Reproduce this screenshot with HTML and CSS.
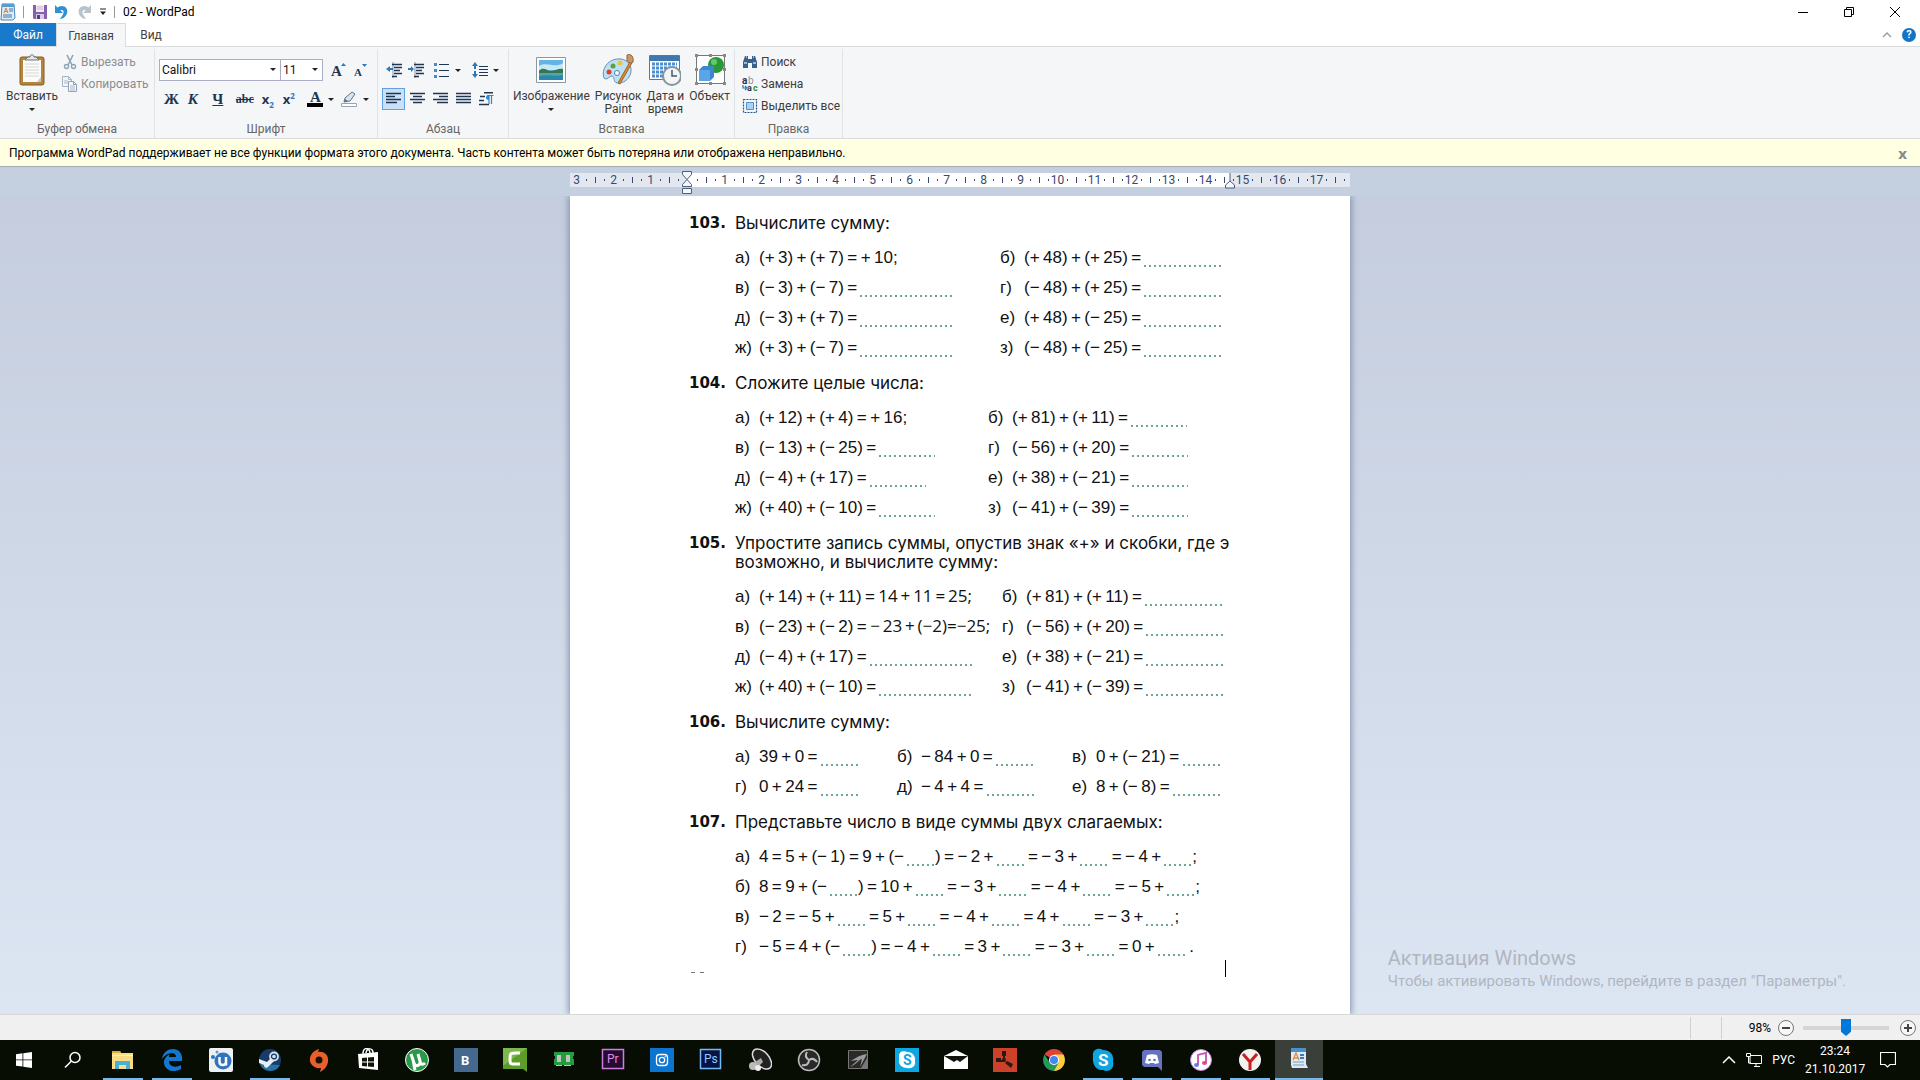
FILE: index.html
```html
<!DOCTYPE html>
<html lang="ru">
	<head>
		<meta charset="utf-8">
		<title>02 - WordPad</title>
		<link rel="stylesheet" href="styles.css">
	</head>

	<body>
		<header class="titleBar">
			<svg class="appIcon" width="16" height="18" viewBox="0 0 16 18"><path d="M2 1h12l1 14-2 2H1z" fill="#dcecf8" stroke="#4a83b5"/><path d="M2 1h12v3H2z" fill="#5a9bd0"/><path d="M4 10l2-5 2 5M5 8.500h2" fill="none" stroke="#e07a2c"/><path d="M9 6h4M9 8h4M3 12h9M3 14h9" stroke="#3d76ab"/></svg>
			<span class="divider"></span>
			<button aria-label="Сохранить"><svg width="16" height="16" viewBox="0 0 16 16"><path d="M1 1h14v14H2l-1-1z" fill="#8560ac"/><path d="M4 1h8v7H4z" fill="#f1e9f6"/><path d="M5 3h6M5 5h6" stroke="#c7b5d6"/><path d="M4 10h8v5H4z" fill="#d9cde5"/><path d="M5 11h3v4H5z" fill="#5d3d85"/></svg></button>
			<button aria-label="Отменить"><svg width="16" height="16" viewBox="0 0 16 16"><path d="M1 1v8h8L6.300 6.300C9 5 10.500 7 9 10.500L6 15c9-1 10-13 1.500-13-2 0-3 .8-4 1.600z" fill="#2d91d2"/></svg></button>
			<button aria-label="Повторить"><svg width="16" height="16" viewBox="0 0 16 16"><path d="M15 1v8H7l2.700-2.700C7 5 5.500 7 7 10.500L10 15C1 14 0 2 8.500 2c2 0 3 .8 4 1.600z" fill="#b9c3cd"/></svg></button>
			<button class="customize" aria-label="Настройка панели"><svg width="8" height="8" viewBox="0 0 8 8"><path d="M1 1h6" stroke="#222"/><path d="M1 3.500h6L4 7z" fill="#222"/></svg></button>
			<span class="divider"></span>
			<h1>02 - WordPad</h1>
			<div class="windowButtons">
				<button aria-label="Свернуть"><svg width="12" height="12" viewBox="0 0 12 12"><path d="M1 6.500h10" stroke="#000"/></svg></button>
				<button aria-label="Восстановить"><svg width="12" height="12" viewBox="0 0 12 12"><path d="M1.500 3.500h7v7h-7zM3.500 3.500v-2h7v7h-2" fill="none" stroke="#000"/></svg></button>
				<button aria-label="Закрыть"><svg width="12" height="12" viewBox="0 0 12 12"><path d="M1 1l10 10M11 1L1 11" stroke="#000"/></svg></button>
			</div>
		</header>

		<nav class="tabs">
			<button class="tab file">Файл</button>
			<button class="tab active">Главная</button>
			<button class="tab">Вид</button>
			<div class="tabTools">
				<button aria-label="Свернуть ленту"><svg width="10" height="6" viewBox="0 0 10 6"><path d="M1 5l4-4 4 4" fill="none" stroke="#9a9a9a" stroke-width="1.300"/></svg></button>
				<button class="help" aria-label="Справка">?</button>
			</div>
		</nav>

		<section class="ribbon">
			<div class="group clipboard">
				<div class="groupBody">
					<button class="big">
						<svg width="26" height="32" viewBox="0 0 26 32"><rect x="1" y="3" width="24" height="28" rx="2" fill="#b5843f" stroke="#875b20"/><path d="M4 6h18v22H4z" fill="#fbfbf7"/><path d="M6 10h14M6 13h14M6 16h14M6 19h14M6 22h14" stroke="#d5d8d8"/><path d="M18 28l4-5v5z" fill="#c9c9c4"/><path d="M6 6l3-3h2c0-3 4-3 4 0h2l3 3z" fill="#e3e8ec" stroke="#68747e"/></svg>
						<span>Вставить</span>
						<i class="arrow"></i>
					</button>
					<div class="stack">
						<button class="row disabled"><svg width="16" height="16" viewBox="0 0 16 16"><path d="M5 1l5 10M11 1L6 11" stroke="#8fa3b8" stroke-width="1.600"/><circle cx="4.500" cy="12.500" r="2" fill="none" stroke="#8fa3b8" stroke-width="1.400"/><circle cx="11.500" cy="12.500" r="2" fill="none" stroke="#8fa3b8" stroke-width="1.400"/></svg>Вырезать</button>
						<button class="row disabled"><svg width="16" height="16" viewBox="0 0 16 16"><path d="M.500.500h6l3 3v7h-9zM6.500.500v3h3" fill="#f4f7fa" stroke="#a3b4c6"/><path d="M6.500 5.500h5l3 3v7h-8zM11.500 5.500v3h3" fill="#f4f7fa" stroke="#8fa3b8"/><path d="M8 10h5M8 12h5M8 14h5M2 5h4M2 7h4" stroke="#a9bacb"/></svg>Копировать</button>
					</div>
				</div>
				<h2>Буфер обмена</h2>
			</div>

			<div class="group font">
				<div class="lines">
					<div class="line">
						<label class="combo family"><select aria-label="Шрифт"><option>Calibri</option></select></label>
						<label class="combo size"><select aria-label="Размер"><option>11</option></select></label>
						<button class="tool grow" aria-label="Увеличить размер"><svg width="16" height="16" viewBox="0 0 16 16"><text x="0" y="14" class="serif" font-size="15">A</text><path d="M10 4l2.500-3L15 4z" fill="#2a78bd"/></svg></button>
						<button class="tool" aria-label="Уменьшить размер"><svg width="14" height="16" viewBox="0 0 14 16"><text x="0" y="14" class="serif" font-size="11">A</text><path d="M8 2l2.500 3L13 2z" fill="#2a78bd"/></svg></button>
					</div>
					<div class="line second">
						<button class="tool letter">Ж</button>
						<button class="tool letter italic">К</button>
						<button class="tool letter underline">Ч</button>
						<button class="tool letter strike">abc</button>
						<button class="tool letter index">x<sub>2</sub></button>
						<button class="tool letter index">x<sup>2</sup></button>
						<button class="tool color" aria-label="Цвет текста"><svg width="16" height="16" viewBox="0 0 16 16"><text x="3" y="11" class="serif" font-size="15">A</text><path d="M0 12h16v4H0z" fill="#000"/></svg><i class="arrow"></i></button>
						<button class="tool" aria-label="Цвет выделения"><svg width="17" height="16" viewBox="0 0 17 16"><path d="M3 11l1-4 7-6 3 2-5 7z" fill="#dbe4ee" stroke="#5b7390"/><path d="M3 11l1-3 3 2z" fill="#5b7390"/><path d="M.500 12.500h15v3H.500z" fill="#fff" stroke="#98a5b3"/></svg><i class="arrow"></i></button>
					</div>
				</div>
				<h2>Шрифт</h2>
			</div>

			<div class="group paragraph">
				<div class="lines">
					<div class="line">
						<button class="tool" aria-label="Уменьшить отступ"><svg width="16" height="16" viewBox="0 0 16 16"><path d="M6 2.500h10M8 5.500h8M8 8.500h6M8 11.500h8M6 14.500h5" stroke="#1f3653" stroke-width="1.400"/><path d="M7 .500v15" stroke="#1f3653" stroke-dasharray="1 1"/><path d="M0 7l4-3v2h3v2H4v2z" fill="#2a78bd"/></svg></button>
						<button class="tool" aria-label="Увеличить отступ"><svg width="16" height="16" viewBox="0 0 16 16"><path d="M6 2.500h10M8 5.500h8M8 8.500h6M8 11.500h8M6 14.500h5" stroke="#1f3653" stroke-width="1.400"/><path d="M7 .500v15" stroke="#1f3653" stroke-dasharray="1 1"/><path d="M6 7L3 4v2H0v2h3v2z" fill="#2a78bd"/></svg></button>
						<button class="tool list" aria-label="Список"><svg width="16" height="16" viewBox="0 0 16 16"><path d="M5 2.500h10M5 8.500h10M5 14.500h10" stroke="#1f3653"/><path d="M0 1h3v3H0zM0 7h3v3H0zM0 13h3v3H0z" fill="#4b8ac2"/></svg><i class="arrow"></i></button>
						<button class="tool" aria-label="Интервал"><svg width="16" height="16" viewBox="0 0 16 16"><path d="M7 4.500h9M7 7.500h9M7 10.500h9M7 13.500h9" stroke="#1f3653" stroke-width="1.200"/><path d="M3 0l3 4H4v3H2V4H0zM3 16l3-4H4V9H2v3H0z" fill="#2a78bd"/></svg><i class="arrow"></i></button>
					</div>
					<div class="line second align">
						<button class="tool selected" aria-label="По левому краю"><svg width="15" height="14" viewBox="0 0 15 14"><path d="M0 1.500h15M0 4.500h9M0 7.500h15M0 10.500h11" stroke="#1f3653" stroke-width="1.400"/></svg></button>
						<button class="tool" aria-label="По центру"><svg width="15" height="14" viewBox="0 0 15 14"><path d="M0 1.500h15M3 4.500h9M0 7.500h15M3 10.500h9" stroke="#1f3653" stroke-width="1.400"/></svg></button>
						<button class="tool" aria-label="По правому краю"><svg width="15" height="14" viewBox="0 0 15 14"><path d="M0 1.500h15M6 4.500h9M0 7.500h15M4 10.500h11" stroke="#1f3653" stroke-width="1.400"/></svg></button>
						<button class="tool" aria-label="По ширине"><svg width="15" height="14" viewBox="0 0 15 14"><path d="M0 1.500h15M0 4.500h15M0 7.500h15M0 10.500h15" stroke="#1f3653" stroke-width="1.400"/></svg></button>
						<button class="tool" aria-label="Абзац"><svg width="15" height="14" viewBox="0 0 15 14"><path d="M5 .700h9M1 4.500h5M0 8.500h5M0 12.500h10" stroke="#1f3653" stroke-width="1.400"/><path d="M8 3.500h6.500M10 4v8M12.500 4v8" fill="none" stroke="#2a88d8" stroke-width="1.200"/><path d="M10 3c-4 0-4 5 0 5z" fill="#2a88d8"/></svg></button>
					</div>
				</div>
				<h2>Абзац</h2>
			</div>

			<div class="group insert">
				<div class="groupBody">
					<button class="big">
						<svg width="32" height="32" viewBox="0 0 32 32"><path d="M1.500 3.500h29v25h-29z" fill="#fff" stroke="#8b98a4"/><path d="M4 6h24v20H4z" fill="#63b4e4"/><path d="M4 12c8-5 16 3 24-3v7H4z" fill="#c9e8f6"/><path d="M4 17c4-5 8 0 12 0s8-3 12-2v5H4z" fill="#36764f"/><path d="M4 19h24v7H4z" fill="#4fa5b8"/><path d="M4 22c9-2 15 1 24-1v5H4z" fill="#2b86a8"/></svg>
						<span>Изображение</span>
						<i class="arrow"></i>
					</button>
					<button class="big">
						<svg width="32" height="32" viewBox="0 0 32 32"><path d="M2 24C-1 16 5 6 15 5c8-1 15 4 14 13-1 7-8 12-14 11-4-1-2-6-5-7-3 0-5 5-8 2z" fill="#bfdff3" stroke="#6394b8"/><circle cx="7" cy="18" r="2.500" fill="#d8412f"/><circle cx="11" cy="12" r="2.500" fill="#55a447"/><circle cx="18" cy="9" r="2.500" fill="#efc43d"/><circle cx="15" cy="19" r="2.500" fill="#fff" stroke="#4b83b6"/><path d="M29 6l2 1-13 23-2-1z" fill="#d88b39" stroke="#a5611f"/><path d="M25 1c4-2 7 2 6 7-2 2-5 0-6-1z" fill="#c9986a" stroke="#8e643b"/></svg>
						<span>Рисунок<br>Paint</span>
					</button>
					<button class="big">
						<svg width="32" height="32" viewBox="0 0 32 32"><path d="M.500 1.500h30v24h-30z" fill="#fff" stroke="#55789c"/><path d="M1 2h29v5H1z" fill="#3f78ad"/><path d="M3 10h25M3 14h25M3 18h25M3 22h25" stroke="#4b8fd0" stroke-width="3" stroke-dasharray="3 1"/><circle cx="23" cy="22" r="9" fill="#f2f4f5" stroke="#87939d" stroke-width="2"/><path d="M23 16v6h5" fill="none" stroke="#4a5966" stroke-width="1.500"/></svg>
						<span>Дата и<br>время</span>
					</button>
					<button class="big">
						<svg width="32" height="32" viewBox="0 0 32 32"><path d="M2.500 1.500h28v28h-28z" fill="#fff" stroke="#777"/><path d="M1 0h3v3H1zM15 0h3v3h-3zM29 0h3v3h-3zM1 14h3v3H1zM29 14h3v3h-3zM1 28h3v3H1zM15 28h3v3h-3zM29 28h3v3h-3z" fill="#888"/><circle cx="22" cy="11" r="8" fill="#289a35"/><circle cx="20" cy="8" r="3" fill="#68c66f"/><path d="M5 16l4-4h11v11l-4 4H5z" fill="#3b88d0"/><path d="M5 16h11v11H5z" fill="#5aa5e8"/></svg>
						<span>Объект</span>
					</button>
				</div>
				<h2>Вставка</h2>
			</div>

			<div class="group edit">
				<div class="stack">
					<button class="row"><svg width="16" height="16" viewBox="0 0 16 16"><path d="M3 2h3v3h4V2h3l2 6v6h-5V9H6v5H1V8z" fill="#3a5f8c"/><path d="M2 9h3M11 9h3M4 3h1M11 3h1" stroke="#c4d7ec" stroke-width="1.500"/></svg>Поиск</button>
					<button class="row"><svg width="16" height="16" viewBox="0 0 16 16"><text x="0" y="8" font-size="10" font-weight="bold" fill="#1f3653">a</text><text x="6" y="8" font-size="10" fill="#8b949e">b</text><text x="5" y="15" font-size="9" font-weight="bold" fill="#1f3653">a</text><text x="11" y="15" font-size="9" font-weight="bold" fill="#2b8b33">c</text><path d="M1 9v3h3M3 10l2 2-2 2" fill="none" stroke="#2a78bd" stroke-width="1.200"/></svg>Замена</button>
					<button class="row"><svg width="16" height="16" viewBox="0 0 16 16"><path d="M1.500 1.500h13v13h-13z" fill="none" stroke="#23598e" stroke-width="1.200" stroke-dasharray="2 1"/><path d="M4.500 4.500h7v7h-7z" fill="#a9d2f5" stroke="#4b93d2"/></svg>Выделить все</button>
				</div>
				<h2>Правка</h2>
			</div>
		</section>

		<aside class="notice">
			<p>Программа WordPad поддерживает не все функции формата этого документа. Часть контента может быть потеряна или отображена неправильно.</p>
			<button aria-label="Закрыть сообщение">x</button>
		</aside>

		<main class="workspace">
			<div class="rulerBand">
				<div class="ruler">
					<div class="scale">
						<span class="first">3</span><span>2</span><span>1</span><span></span><span>1</span><span>2</span><span>3</span><span>4</span><span>5</span><span>6</span><span>7</span><span>8</span><span>9</span><span>10</span><span>11</span><span>12</span><span>13</span><span>14</span><span>15</span><span>16</span><span>17</span><span></span>
					</div>
					<svg class="marker left" width="10" height="24" viewBox="0 0 10 24"><path d="M.500.500h9v3L5 8.500.500 3.500zM5 8.500l4.500 5v2h-9v-2zM.500 17.500h9v5h-9z" fill="#f3f6fa" stroke="#4c5f7c"/></svg>
					<svg class="marker right" width="10" height="16" viewBox="0 0 10 16"><path d="M5 0v8l4.500 4v3h-9v-3L5 8" fill="#f3f6fa" stroke="#4c5f7c"/></svg>
				</div>
			</div>

			<article class="page">
				<section class="task">
					<h3><b>103.</b><span>Вычислите сумму:</span></h3>
					<ol class="two t103">
						<li><i>а)</i>(+&thinsp;3)&thinsp;+&thinsp;(+&thinsp;7)&thinsp;=&thinsp;+&thinsp;10;</li>
						<li><i>б)</i>(+&thinsp;48)&thinsp;+&thinsp;(+&thinsp;25)&thinsp;=<u class="w80"></u></li>
						<li><i>в)</i>(−&thinsp;3)&thinsp;+&thinsp;(−&thinsp;7)&thinsp;=<u class="w95"></u></li>
						<li><i>г)</i>(−&thinsp;48)&thinsp;+&thinsp;(+&thinsp;25)&thinsp;=<u class="w80"></u></li>
						<li><i>д)</i>(−&thinsp;3)&thinsp;+&thinsp;(+&thinsp;7)&thinsp;=<u class="w95"></u></li>
						<li><i>е)</i>(+&thinsp;48)&thinsp;+&thinsp;(−&thinsp;25)&thinsp;=<u class="w80"></u></li>
						<li><i>ж)</i>(+&thinsp;3)&thinsp;+&thinsp;(−&thinsp;7)&thinsp;=<u class="w95"></u></li>
						<li><i>з)</i>(−&thinsp;48)&thinsp;+&thinsp;(−&thinsp;25)&thinsp;=<u class="w80"></u></li>
					</ol>
				</section>

				<section class="task">
					<h3><b>104.</b><span>Сложите целые числа:</span></h3>
					<ol class="two t104">
						<li><i>а)</i>(+&thinsp;12)&thinsp;+&thinsp;(+&thinsp;4)&thinsp;=&thinsp;+&thinsp;16;</li>
						<li><i>б)</i>(+&thinsp;81)&thinsp;+&thinsp;(+&thinsp;11)&thinsp;=<u class="w55"></u></li>
						<li><i>в)</i>(−&thinsp;13)&thinsp;+&thinsp;(−&thinsp;25)&thinsp;=<u class="w55"></u></li>
						<li><i>г)</i>(−&thinsp;56)&thinsp;+&thinsp;(+&thinsp;20)&thinsp;=<u class="w55"></u></li>
						<li><i>д)</i>(−&thinsp;4)&thinsp;+&thinsp;(+&thinsp;17)&thinsp;=<u class="w55"></u></li>
						<li><i>е)</i>(+&thinsp;38)&thinsp;+&thinsp;(−&thinsp;21)&thinsp;=<u class="w55"></u></li>
						<li><i>ж)</i>(+&thinsp;40)&thinsp;+&thinsp;(−&thinsp;10)&thinsp;=<u class="w55"></u></li>
						<li><i>з)</i>(−&thinsp;41)&thinsp;+&thinsp;(−&thinsp;39)&thinsp;=<u class="w55"></u></li>
					</ol>
				</section>

				<section class="task">
					<h3><b>105.</b><span>Упростите запись суммы, опустив знак «+» и скобки, где э<br>возможно, и вычислите сумму:</span></h3>
					<ol class="two t105">
						<li><i>а)</i>(+&thinsp;14)&thinsp;+&thinsp;(+&thinsp;11)&thinsp;=&thinsp;<em>14&thinsp;+&thinsp;11&thinsp;=&thinsp;25;</em></li>
						<li><i>б)</i>(+&thinsp;81)&thinsp;+&thinsp;(+&thinsp;11)&thinsp;=<u class="w80"></u></li>
						<li><i>в)</i>(−&thinsp;23)&thinsp;+&thinsp;(−&thinsp;2)&thinsp;=&thinsp;<em>−&thinsp;23&thinsp;+&thinsp;(−2)=−25;</em></li>
						<li><i>г)</i>(−&thinsp;56)&thinsp;+&thinsp;(+&thinsp;20)&thinsp;=<u class="w80"></u></li>
						<li><i>д)</i>(−&thinsp;4)&thinsp;+&thinsp;(+&thinsp;17)&thinsp;=<u class="w105"></u></li>
						<li><i>е)</i>(+&thinsp;38)&thinsp;+&thinsp;(−&thinsp;21)&thinsp;=<u class="w80"></u></li>
						<li><i>ж)</i>(+&thinsp;40)&thinsp;+&thinsp;(−&thinsp;10)&thinsp;=<u class="w95"></u></li>
						<li><i>з)</i>(−&thinsp;41)&thinsp;+&thinsp;(−&thinsp;39)&thinsp;=<u class="w80"></u></li>
					</ol>
				</section>

				<section class="task">
					<h3><b>106.</b><span>Вычислите сумму:</span></h3>
					<ol class="three">
						<li><i>а)</i>39&thinsp;+&thinsp;0&thinsp;=&thinsp;<u class="w40"></u></li>
						<li><i>б)</i>−&thinsp;84&thinsp;+&thinsp;0&thinsp;=&thinsp;<u class="w40"></u></li>
						<li><i>в)</i>0&thinsp;+&thinsp;(−&thinsp;21)&thinsp;=&thinsp;<u class="w40"></u></li>
						<li><i>г)</i>0&thinsp;+&thinsp;24&thinsp;=&thinsp;<u class="w40"></u></li>
						<li><i>д)</i>−&thinsp;4&thinsp;+&thinsp;4&thinsp;=&thinsp;<u class="w50"></u></li>
						<li><i>е)</i>8&thinsp;+&thinsp;(−&thinsp;8)&thinsp;=&thinsp;<u class="w50"></u></li>
					</ol>
				</section>

				<section class="task">
					<h3><b>107.</b><span>Представьте число в виде суммы двух слагаемых:</span></h3>
					<ol class="chain">
						<li><i>а)</i>4&thinsp;=&thinsp;5&thinsp;+&thinsp;(−&thinsp;1)&thinsp;=&thinsp;9&thinsp;+&thinsp;(−<u></u>)&thinsp;=&thinsp;−&thinsp;2&thinsp;+<u></u>&thinsp;=&thinsp;−&thinsp;3&thinsp;+<u></u>&thinsp;=&thinsp;−&thinsp;4&thinsp;+<u></u>;</li>
						<li><i>б)</i>8&thinsp;=&thinsp;9&thinsp;+&thinsp;(−<u></u>)&thinsp;=&thinsp;10&thinsp;+<u></u>&thinsp;=&thinsp;−&thinsp;3&thinsp;+<u></u>&thinsp;=&thinsp;−&thinsp;4&thinsp;+<u></u>&thinsp;=&thinsp;−&thinsp;5&thinsp;+<u></u>;</li>
						<li><i>в)</i>−&thinsp;2&thinsp;=&thinsp;−&thinsp;5&thinsp;+<u></u>&thinsp;=&thinsp;5&thinsp;+<u></u>&thinsp;=&thinsp;−&thinsp;4&thinsp;+<u></u>&thinsp;=&thinsp;4&thinsp;+<u></u>&thinsp;=&thinsp;−&thinsp;3&thinsp;+<u></u>;</li>
						<li><i>г)</i>−&thinsp;5&thinsp;=&thinsp;4&thinsp;+&thinsp;(−<u></u>)&thinsp;=&thinsp;−&thinsp;4&thinsp;+<u></u>&thinsp;=&thinsp;3&thinsp;+<u></u>&thinsp;=&thinsp;−&thinsp;3&thinsp;+<u></u>&thinsp;=&thinsp;0&thinsp;+<u></u>&thinsp;.</li>
					</ol>
				</section>
				<div class="tail"><span class="dashes"></span><span class="caret"></span></div>
			</article>

			<div class="watermark">
				<strong>Активация Windows</strong>
				<p>Чтобы активировать Windows, перейдите в раздел "Параметры".</p>
			</div>
		</main>

		<footer class="statusBar">
			<span class="cell"></span>
			<label for="zoom">98%</label>
			<button aria-label="Уменьшить"><svg width="16" height="16" viewBox="0 0 16 16"><circle cx="8" cy="8" r="7.500" fill="#f7f7f7" stroke="#777"/><path d="M4 8h8" stroke="#444" stroke-width="2"/></svg></button>
			<input id="zoom" type="range" min="0" max="200" value="100">
			<button aria-label="Увеличить"><svg width="16" height="16" viewBox="0 0 16 16"><circle cx="8" cy="8" r="7.500" fill="#f7f7f7" stroke="#777"/><path d="M4 8h8M8 4v8" stroke="#444" stroke-width="2"/></svg></button>
		</footer>

		<nav class="taskbar">
			<button class="sys" aria-label="Пуск"><svg width="16" height="16" viewBox="0 0 16 16"><path d="M0 2.200l6.500-.900v6.200H0zM7.300 1.200L16 0v7.500H7.300zM0 8.300h6.500v6.300L0 13.700zM7.300 8.300H16V16l-8.700-1.300z" fill="#fff"/></svg></button>
			<button class="sys search" aria-label="Поиск"><svg width="18" height="18" viewBox="0 0 18 18"><circle cx="11" cy="6.500" r="5" fill="none" stroke="#fff" stroke-width="1.500"/><path d="M7.300 10.200L1 16.500" stroke="#fff" stroke-width="1.500"/></svg></button>
			<button class="running" aria-label="Проводник"><svg viewBox="0 0 24 24"><path d="M1 3h8l1 2h12v16H1z" fill="#f9dc86"/><path d="M1 3h8l1 2H1z" fill="#e0aa3c"/><path d="M1 7h21v1H1z" fill="#fff0bd"/><path d="M4 13h15v8h-4v-4H8v4H4z" fill="#47b0d3"/></svg></button>
			<button class="running" aria-label="Edge"><svg viewBox="0 0 24 24"><path d="M2 11C3 4 8 1 13 1c6 0 10 5 9 12H9c0 6 7 7 12 4v4C12 26 3 21 4 13c1-4 4-6 6-7-1 1-1 2-1 3h7c0-6-9-5-14 2z" fill="#1277d1"/></svg></button>
			<button aria-label="uCoz"><svg viewBox="0 0 24 24"><rect width="24" height="24" rx="2" fill="#eef1f4"/><circle cx="14" cy="13" r="8.500" fill="#3174bc"/><circle cx="4" cy="9" r="2" fill="#3174bc"/><circle cx="8" cy="4" r="1.500" fill="#5d9bd6"/><path d="M10.500 9v5c0 4 6.500 4 6.500 0V9v8.500" fill="none" stroke="#fff" stroke-width="2.500"/></svg></button>
			<button class="running split" aria-label="Steam"><svg viewBox="0 0 24 24"><circle cx="12" cy="12" r="11" fill="#173b6b"/><path d="M2 16a11 11 0 0 0 20 1z" fill="#2673a5"/><circle cx="16" cy="8.500" r="4" fill="none" stroke="#d9e2ea" stroke-width="1.800"/><circle cx="16" cy="8.500" r="1.800" fill="#d9e2ea"/><path d="M1 11l8 3 4-4 3 3-5 5c-2 3-5 2-5-1l-5-2z" fill="#e9eff3"/></svg></button>
			<button aria-label="Origin"><svg viewBox="0 0 24 24"><path d="M12 1l-1 3c7-1 11 4 10 10-1 5-4 8-8 10l1-4C7 21 2 16 3 10c1-5 5-8 9-9z" fill="#e85f2b"/><circle cx="12" cy="12" r="3.500" fill="#151107"/></svg></button>
			<button aria-label="Store"><svg viewBox="0 0 24 24"><path d="M2 6l20-2v18L3 20z" fill="#fff"/><path d="M7 6c0-7 6-7 7-1M10 5c1-6 7-5 7 0" fill="none" stroke="#fff" stroke-width="1.500"/><path d="M6 10l5-.500v4H6zM12 9.400l6-.500v4.600h-6zM6 14.500h5v4l-5-.500zM12 14.500h6v4.500l-6-.500z" fill="#10150a"/></svg></button>
			<button aria-label="uTorrent"><svg viewBox="0 0 24 24"><circle cx="12" cy="12" r="11.500" fill="#2a994a" stroke="#fff"/><path d="M6 6l3 9c2 5 7 2 6-2l-2-7m2 7c1 4 3 4 5 2M8 12l2 10" fill="none" stroke="#fff" stroke-width="3"/></svg></button>
			<button aria-label="VK"><svg viewBox="0 0 24 24"><path d="M0 0h24v24H0z" fill="#45688e"/><text x="7" y="17" font-size="13" font-weight="bold" fill="#fff">B</text></svg></button>
			<button aria-label="Camtasia"><svg viewBox="0 0 24 24"><path d="M0 0h24v24l-4-3H0z" fill="#5d9c28"/><path d="M0 0h24L0 18z" fill="#7db84b"/><path d="M17 5h-5c-5 0-5 1-5 6s0 5 5 5h5" fill="none" stroke="#fff" stroke-width="3"/></svg></button>
			<button aria-label="Память"><svg viewBox="0 0 24 24"><path d="M2 4h20v4h-1v3h1v6H2v-6h1V8H2z" fill="#249b41"/><path d="M4 17h6v1H4zM12 17h7v1h-7z" fill="#c7dd39"/><path d="M5 7h4v7H5zM14 7h4v7h-4z" fill="#bec5bb"/></svg></button>
			<button aria-label="Premiere"><svg viewBox="0 0 24 24"><path d="M1.500 1.500h21v19h-21z" fill="#250b31" stroke="#cb7ede" stroke-width="1.500"/><text x="6" y="15" font-size="12" fill="#dc8cf0">Pr</text></svg></button>
			<button aria-label="Instagram"><svg viewBox="0 0 24 24"><path d="M0 0h24v24H0z" fill="#0b74d0"/><rect x="6.500" y="6.500" width="11" height="11" rx="3" fill="none" stroke="#fff" stroke-width="1.300"/><circle cx="12" cy="12" r="2.700" fill="none" stroke="#fff" stroke-width="1.300"/><circle cx="15.200" cy="8.800" r=".700" fill="#fff"/></svg></button>
			<button aria-label="Photoshop"><svg viewBox="0 0 24 24"><path d="M1.500 1.500h20v19h-20z" fill="#061445" stroke="#76baf5" stroke-width="1.500"/><text x="5" y="15" font-size="12" fill="#8ccbfa">Ps</text></svg></button>
			<button aria-label="Звук"><svg viewBox="0 0 24 24"><ellipse cx="14" cy="11" rx="7" ry="12" transform="rotate(-42 14 11)" fill="#222" stroke="#ddd" stroke-width="1.500"/><path d="M7 14l6-4 2 4-5 5z" fill="#aaa"/><circle cx="5" cy="18" r="4" fill="#bbb"/><circle cx="10" cy="20" r="3" fill="#eee"/></svg></button>
			<button aria-label="OBS"><svg viewBox="0 0 24 24"><circle cx="12" cy="12" r="10.500" fill="#292929" stroke="#bbb" stroke-width="1.500"/><path d="M10 4c-2 3-1 6 2 8 3-2 6-1 8 2M12 12c0 4-3 6-7 5" fill="none" stroke="#bbb" stroke-width="2"/></svg></button>
			<button aria-label="NVIDIA"><svg viewBox="0 0 24 24"><path d="M2.500 2.500h19v18h-19z" fill="#2a2a2a" stroke="#777"/><path d="M4 13c4-1 6-5 17-7l-7 13 2-8c-4 1-6 6-12 8l8-7z" fill="#999"/><path d="M15 20l6-10v10z" fill="#777"/></svg></button>
			<button aria-label="Skype"><svg viewBox="0 0 24 24"><path d="M0 0h24v24H0z" fill="#0ba7e2"/><path d="M4 7c1-5 6-4 8-3 6 0 9 5 8 9 1 5-3 8-8 7-6 0-9-5-8-8z" fill="#fff"/><text x="8" y="17" font-size="14" font-weight="bold" fill="#0ba7e2">S</text></svg></button>
			<button aria-label="Почта"><svg viewBox="0 0 24 24"><path d="M0 8l12-6 12 6v13H0z" fill="#fff"/><path d="M0 8h24l-8 6-3-2-3 2z" fill="#11160d"/></svg></button>
			<button aria-label="Rust"><svg viewBox="0 0 24 24"><path d="M0 0h24v24H0z" fill="#cd412b"/><circle cx="11" cy="12" r="2" fill="#291a15"/><path d="M9 3h4v5H9zM3 10h5v4H3zM14 13l6 3-2 4-6-5z" fill="#291a15"/><path d="M10 7h2v4h-2zM8 12h3v2H8z" fill="#291a15"/></svg></button>
			<button aria-label="Chrome"><svg viewBox="0 0 24 24"><path d="M12 12L2.500 6.500a11 11 0 0 1 19 0z" fill="#db4437"/><path d="M12 12H22a11 11 0 0 1-10 11z" fill="#ffcd40"/><path d="M21.500 6.500A11 11 0 0 1 12 23l4-9-4-7.500z" fill="#ffcd40"/><path d="M2.500 6.500A11 11 0 0 0 12 23l4.500-8-9-1z" fill="#229a59"/><circle cx="12" cy="12" r="5" fill="#fff"/><circle cx="12" cy="12" r="4" fill="#4285f4"/></svg></button>
			<button class="running" aria-label="Skype"><svg viewBox="0 0 24 24"><path d="M2 8C1 2 7-1 12 2c8 0 11 6 10 11 2 7-4 12-10 9C5 22 1 17 2 8z" fill="#10a5df"/><text x="7" y="18" font-size="17" font-weight="bold" fill="#fff">S</text></svg></button>
			<button class="running" aria-label="Discord"><svg viewBox="0 0 24 24"><path d="M4 2h16l2 2v19l-4-4H4l-2-2V4z" fill="#6773bd"/><path d="M7 7c3-1 7-1 10 0l2 8-4 1-1-1h-4l-1 1-4-1z" fill="#fff"/><circle cx="9.500" cy="12" r="1.300" fill="#6773bd"/><circle cx="14.500" cy="12" r="1.300" fill="#6773bd"/></svg></button>
			<button class="running" aria-label="iTunes"><svg viewBox="0 0 24 24"><circle cx="12" cy="12" r="10.500" fill="#fff" stroke="#bd83d6"/><path d="M9 17V7l8-2v10" fill="none" stroke="#c64fae" stroke-width="1.800"/><ellipse cx="7.500" cy="17" rx="2.500" ry="2" fill="#6b7be8"/><ellipse cx="15.500" cy="15" rx="2.500" ry="2" fill="#e34786"/></svg></button>
			<button class="running" aria-label="Яндекс"><svg viewBox="0 0 24 24"><circle cx="12" cy="12" r="11" fill="#f3f2f0"/><path d="M5 6l7 8 7-8M12 13v9" fill="none" stroke="#c91f1f" stroke-width="3"/></svg></button>
			<button class="current" aria-label="WordPad"><svg viewBox="0 0 24 24"><path d="M4 1h15v16l2 4H5l-1-3z" fill="#dcebf8"/><path d="M4 1h15v4H4z" fill="#4a91cc"/><path d="M6 13l3-7 3 7M7 11h4" fill="none" stroke="#e58a39" stroke-width="1.300"/><path d="M13 8h4M13 11h4" stroke="#397cb8" stroke-width="2"/><path d="M6 15h11M6 18h11" stroke="#7b9dbb"/></svg></button>

			<div class="tray">
				<button class="up" aria-label="Скрытые значки"><svg width="14" height="8" viewBox="0 0 14 8"><path d="M1 7l6-6 6 6" fill="none" stroke="#fff" stroke-width="1.500"/></svg></button>
				<button aria-label="Сеть"><svg width="16" height="14" viewBox="0 0 16 14"><path d="M4.500 2.500h11v8H4V4M8 13.500h6M10 10v3M.500.500h4v3h-4zM2.500 3v7H5" fill="none" stroke="#fff"/></svg></button>
				<button>РУС</button>
				<time>23:24<br>21.10.2017</time>
				<button class="center" aria-label="Уведомления"><svg width="16" height="16" viewBox="0 0 16 16"><path d="M.500.500h15v12H10L7.500 15 5 12.500H.500z" fill="none" stroke="#fff" stroke-width="1.200"/></svg></button>
			</div>
		</nav>
	</body>
</html>
```
FILE: styles.css
```css
* {box-sizing: border-box;}

body
{
	margin: 0;
	min-height: 100vh;
	display: flex;
	flex-direction: column;
	font-family: Roboto, "Open Sans", sans-serif;
	font-size: 12px;
	color: #222;
	background-color: #fff;
}

button
{
	padding: 0;
	border: 0;
	background: none;
	font: inherit;
	color: inherit;
}

svg
{
	display: block;
	flex: none;
}

h1, h2, h3, p, ol
{
	margin: 0;
	padding: 0;
	font-size: inherit;
	font-weight: normal;
}

/* title bar */

.titleBar
{
	height: 23px;
	display: flex;
	align-items: center;
	gap: 6px;
}

.divider
{
	width: 1px;
	height: 12px;
	margin: 0 2px 0 1px;
	background-color: #999;
}

.titleBar .customize
{
	margin-left: 1px;
}

.titleBar h1
{
	color: #000;
}

.windowButtons
{
	margin-left: auto;
	display: flex;
	align-items: center;
	gap: 34px;
	padding-right: 19px;
}

/* tabs */

.tabs
{
	height: 24px;
	display: flex;
	border-bottom: 1px solid #dadbdc;
}

.tab
{
	width: 50px;
	height: 23px;
	color: #444;
}

.tab.file
{
	width: 56px;
	background-color: #1979ca;
	color: #fff;
}

.tab.active
{
	width: 70px;
	height: 24px;
	background-color: #f5f6f7;
	border: 1px solid #dadbdc;
	border-bottom: 0;
}

.tabTools
{
	margin-left: auto;
	padding-right: 4px;
	display: flex;
	align-items: center;
	gap: 10px;
}

.help
{
	width: 14px;
	height: 14px;
	border-radius: 50%;
	background-color: #1274c6;
	color: #fff;
	font-size: 11px;
	font-weight: bold;
	line-height: 14px;
}

/* ribbon */

.ribbon
{
	height: 92px;
	display: flex;
	padding-top: 2px;
	background-color: #f5f6f7;
	border-bottom: 1px solid #dadbdc;
}

.group
{
	display: flex;
	flex-direction: column;
	justify-content: space-between;
	border-right: 1px solid #e0e2e4;
	color: #3c3c3c;
}

.group h2
{
	text-align: center;
	line-height: 18px;
	color: #666;
}

.clipboard {width: 155px;}
.font {width: 223px;}
.paragraph {width: 131px;}
.insert {width: 226px;}
.edit {width: 108px;}

.groupBody
{
	display: flex;
}

.clipboard .groupBody
{
	padding-left: 6px;
	gap: 4px;
}

.insert .groupBody
{
	justify-content: center;
	gap: 5px;
}

.big
{
	display: flex;
	flex-direction: column;
	align-items: center;
	padding-top: 5px;
	line-height: 13px;
}

.big span
{
	padding-top: 4px;
}

.arrow
{
	width: 0;
	height: 0;
	border: 3px solid transparent;
	border-top-color: #222;
	border-bottom: 0;
}

.big .arrow
{
	margin-top: 5px;
}

.stack
{
	display: flex;
	flex-direction: column;
	padding-top: 2px;
}

.edit .stack
{
	padding-left: 7px;
}

.row
{
	height: 22px;
	display: flex;
	align-items: center;
	gap: 3px;
}

.disabled
{
	color: #8d8d8d;
}

.lines
{
	padding: 10px 0 0 4px;
}

.line
{
	height: 22px;
	display: flex;
	align-items: center;
}

.line.second
{
	height: 24px;
	margin-top: 6px;
	padding-left: 5px;
	gap: 7px;
}

.combo
{
	position: relative;
	height: 22px;
	border: 1px solid #abadc8;
	background-color: #fff;
}

.combo.family {width: 122px;}

.combo.size
{
	width: 43px;
	margin-left: -1px;
}

.combo select
{
	appearance: none;
	width: 100%;
	height: 20px;
	padding: 0 2px;
	border: 0;
	background: none;
	font: inherit;
	line-height: 20px;
	color: #111;
}

.combo::after
{
	content: "";
	position: absolute;
	right: 4px;
	top: 8px;
	border: 3px solid transparent;
	border-top-color: #222;
	border-bottom: 0;
}

.tool
{
	display: flex;
	align-items: center;
	gap: 5px;
}

.tool.grow
{
	margin: 0 7px 0 8px;
}

.tool.color
{
	margin-left: 4px;
}

.serif
{
	font-family: "Liberation Serif", serif;
	font-weight: bold;
	fill: #1f3653;
}

.letter
{
	display: block;
	min-width: 14px;
	font-family: "Liberation Serif", serif;
	font-size: 15px;
	font-weight: bold;
	line-height: 20px;
	color: #1f3653;
}

.italic
{
	font-style: italic;
}

.underline
{
	margin: 0 4px;
	text-decoration: underline;
}

.strike
{
	font-size: 12px;
	text-decoration: line-through;
}

.index
{
	font-family: "Open Sans", sans-serif;
	font-size: 13px;
}

.letter sub, .letter sup
{
	font-size: 8px;
	line-height: 0;
	color: #2a78bd;
}

.paragraph .line
{
	padding-left: 4px;
	gap: 6px;
}

.paragraph .list
{
	margin: 0 5px 0 4px;
}

.paragraph .align
{
	padding-left: 0;
	gap: 8px;
}

.selected
{
	width: 23px;
	height: 22px;
	justify-content: center;
	margin-right: -3px;
	border: 1px solid #62a2e4;
	background-color: #c9e0f7;
}

/* message line */

.notice
{
	height: 28px;
	display: flex;
	align-items: center;
	justify-content: space-between;
	padding: 0 13px 0 9px;
	background-color: #ffffe1;
	border-bottom: 1px solid #a5acb5;
	color: #000;
}

.notice button
{
	font-family: "Open Sans", sans-serif;
	font-size: 15px;
	font-weight: bold;
	line-height: 20px;
	color: #888;
}

/* document area */

.workspace
{
	position: relative;
	flex: 1;
	display: flex;
	flex-direction: column;
	background-image: linear-gradient(#c4ccdd, #dce6f3);
}

.rulerBand
{
	height: 29px;
	padding-top: 6px;
	background-color: #c4cfdf;
}

.ruler
{
	position: relative;
	width: 100%;
	max-width: 780px;
	height: 14px;
	margin: 0 auto;
	background-image: linear-gradient(90deg, #e3e8f0 117px, #fff 117px, #fff 660px, #e3e8f0 660px);
}

.scale
{
	display: flex;
	height: 14px;
	overflow: hidden;
}

.scale span
{
	flex: none;
	width: 37px;
	text-align: center;
	line-height: 14px;
	color: #364a70;
	background-image: linear-gradient(#364a70, #364a70), linear-gradient(#364a70, #364a70), linear-gradient(#364a70, #364a70);
	background-repeat: no-repeat;
	background-size: 1px 6px, 1px 2px, 1px 2px;
	background-position: 0 4px, 9px 6px, 28px 6px;
}

/* the scale starts in the middle of a centimetre */
.scale .first
{
	width: 25px;
	padding-right: 12px;
	background-position: -1px 4px, -1px 6px, 16px 6px;
}

.marker
{
	position: absolute;
}

.marker.left
{
	left: 112px;
	top: -2px;
}

.marker.right
{
	left: 655px;
	top: 0;
}

.page
{
	flex: 1;
	width: 100%;
	max-width: 780px;
	margin: 0 auto;
	padding: 18px 120px 30px 119px;
	background-color: #fff;
	box-shadow: 0 0 7px 1px #7b8aa8;
	clip-path: inset(0 -10px 0 -10px);
	font-family: "Liberation Sans", Arial, sans-serif;
	font-size: 17px;
	color: #111;
}

.task
{
	margin-bottom: 11px;
}

.task h3
{
	display: flex;
	margin-bottom: 10px;
	font-family: Inter, "Liberation Sans", sans-serif;
	line-height: 19px;
	white-space: nowrap;
}

.task h3 b
{
	width: 46px;
	font-family: "DejaVu Sans", sans-serif;
	font-size: 15px;
}

.task ol
{
	display: grid;
	margin-left: 46px;
	list-style: none;
}

.t103 {grid-template-columns: 265px 1fr;}
.t104 {grid-template-columns: 253px 1fr;}
.t105 {grid-template-columns: 267px 1fr;}
.three {grid-template-columns: 162px 175px 1fr;}

.task li
{
	height: 30px;
	line-height: 30px;
	white-space: nowrap;
}

.task i
{
	display: inline-block;
	min-width: 24px;
	font-style: normal;
}

.task em
{
	font-family: "Open Sans", sans-serif;
	font-style: normal;
	line-height: 20px;
}

/* dotted gap for an answer */

.task u
{
	display: inline-block;
	width: 28px;
	height: 2px;
	margin: 0 3px;
	vertical-align: -4px;
	background-image: repeating-linear-gradient(90deg, #6aa893 0, #6aa893 2px, transparent 2px, transparent 5px);
}

.task .w40 {width: 40px;}
.task .w50 {width: 48px;}
.task .w55 {width: 56px;}
.task .w80 {width: 80px;}
.task .w95 {width: 95px;}
.task .w105 {width: 105px;}

.three u
{
	margin: 0;
}

.chain u
{
	margin: 0 0 0 3px;
}

.tail
{
	display: flex;
	justify-content: space-between;
	margin-top: -13px;
}

.dashes
{
	width: 14px;
	height: 1px;
	margin: 12px 0 0 2px;
	background-image: repeating-linear-gradient(90deg, #777 0, #777 4px, transparent 4px, transparent 9px);
}

.caret
{
	width: 1px;
	height: 17px;
	margin-right: 4px;
	background-color: #000;
}

.watermark
{
	position: absolute;
	right: 74px;
	bottom: 23px;
	color: #b0b6c1;
	font-size: 15px;
	line-height: 20px;
}

.watermark strong
{
	display: block;
	font-size: 20px;
	font-weight: normal;
	line-height: 26px;
}

/* status line */

.statusBar
{
	height: 26px;
	display: flex;
	align-items: center;
	justify-content: flex-end;
	gap: 7px;
	padding-right: 4px;
	background-color: #f0f0f0;
	border-top: 1px solid #d7d7d7;
	color: #000;
}

.cell
{
	width: 32px;
	height: 22px;
	margin-right: 20px;
	border: solid #d0d0d0;
	border-width: 0 1px;
}

.statusBar input
{
	appearance: none;
	width: 86px;
	height: 18px;
	margin: 0 4px 0 2px;
	background: linear-gradient(#d6d6d6, #d6d6d6) center / 100% 4px no-repeat;
}

.statusBar input::-webkit-slider-thumb
{
	appearance: none;
	width: 10px;
	height: 17px;
	background-color: #0078d7;
	clip-path: polygon(0 0, 100% 0, 100% 75%, 50% 100%, 0 75%);
}

/* taskbar */

.taskbar
{
	height: 40px;
	display: flex;
	gap: 1px;
	background-color: #080d04;
	color: #fff;
}

.taskbar > button
{
	width: 48px;
	height: 40px;
	display: flex;
	align-items: center;
	justify-content: center;
}

.taskbar > .search
{
	margin-right: 1px;
}

.taskbar > button:not(.sys) svg
{
	width: 24px;
	height: 24px;
}

.running
{
	background: linear-gradient(#76b9ed, #76b9ed) bottom / 40px 2px no-repeat;
}

.taskbar .current
{
	background-color: #3b3f3a;
	border-bottom: 2px solid #76b9ed;
}

.tray
{
	margin-left: auto;
	display: flex;
	align-items: center;
	gap: 10px;
	padding-right: 24px;
}

.tray time
{
	width: 60px;
	text-align: center;
	line-height: 18px;
}

.tray .center
{
	margin-left: 5px;
}
```
